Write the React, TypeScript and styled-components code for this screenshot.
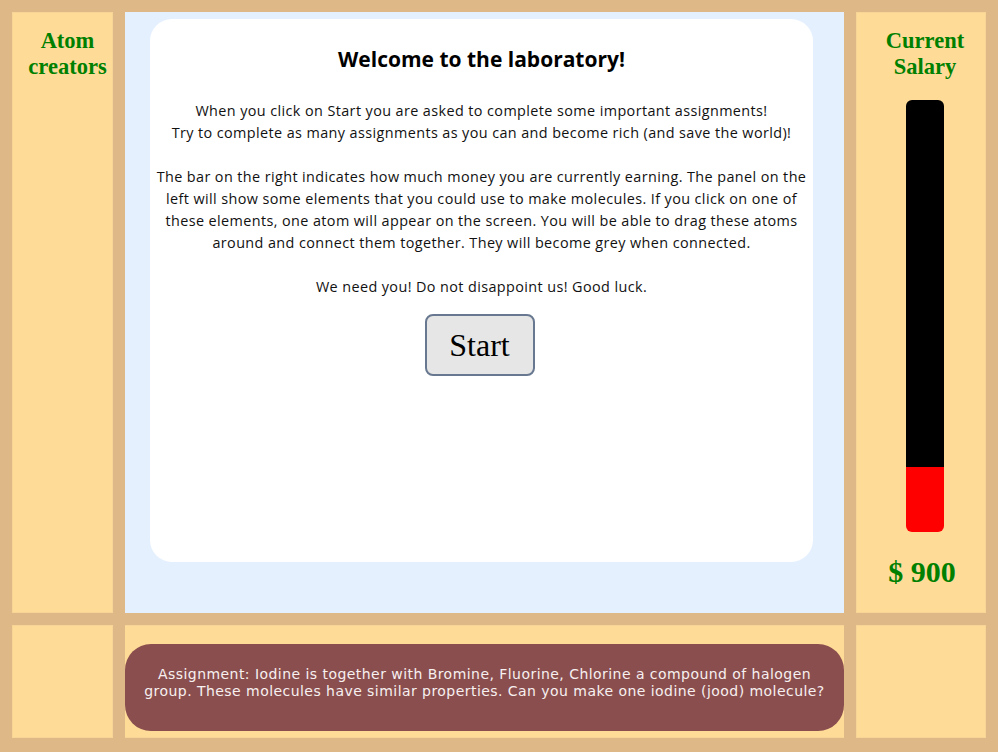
import React from 'react';
import styled, { createGlobalStyle } from 'styled-components';

const GlobalStyle = createGlobalStyle`
  html, body {
    margin: 0;
    padding: 0;
    background: #deb887;
  }
`;

const Layout = styled.div`
  width: 998px;
  height: 752px;
  box-sizing: border-box;
  padding: 12px 12px 14px 12px;
  background: #deb887;
  display: grid;
  grid-template-columns: 101px 719px 130px;
  grid-template-rows: 601px 1fr;
  gap: 12px;
`;

const Cell = styled.div<{ $tone?: 'sand' | 'sky' }>`
  box-sizing: border-box;
  background: ${p => (p.$tone === 'sky' ? '#e5f0ff' : '#ffdb98')};
  border: 1px solid ${p => (p.$tone === 'sky' ? '#e5f0ff' : '#f7d597')};
  min-width: 0;
`;

const SideColumn = styled(Cell)<{ $shift: number }>`
  display: flex;
  flex-direction: column;
  align-items: center;
  padding: 15px 0 0 ${p => p.$shift}px;
`;

const SideTitle = styled.h2`
  margin: 0;
  font-family: 'Liberation Serif', 'Times New Roman', serif;
  font-weight: bold;
  font-size: 22.5px;
  line-height: 26px;
  color: #008000;
  text-align: center;
`;

const SalaryBar = styled.div<{ $fill: number }>`
  margin-top: 20px;
  width: 38px;
  height: 432px;
  border-radius: 6px;
  background: linear-gradient(
    to top,
    #ff0000 0,
    #ff0000 ${p => p.$fill}%,
    #000000 ${p => p.$fill}%,
    #000000 100%
  );
`;

const Salary = styled.div`
  margin-top: 23px;
  font-family: 'Liberation Serif', 'Times New Roman', serif;
  font-weight: bold;
  font-size: 30px;
  line-height: 34px;
  color: #008000;
  padding-right: 6px;
`;

const Stage = styled(Cell)`
  padding: 6px 30px 50px 24px;
  display: flex;
`;

const WelcomeCard = styled.div`
  flex: 1;
  background: #ffffff;
  border-radius: 22px;
  padding: 27px 0 0 0;
  display: flex;
  flex-direction: column;
  align-items: center;
  font-family: 'Open Sans', Lato, sans-serif;
  color: #111;
`;

const Heading = styled.h1`
  margin: 0 0 28px 0;
  font-size: 21px;
  line-height: 26px;
  font-weight: 700;
  color: #000;
`;

const Paragraph = styled.p`
  margin: 0 0 22px 0;
  font-size: 14.4px;
  line-height: 22px;
  letter-spacing: 0.4px;
  text-align: center;
  white-space: nowrap;
`;

const StartButton = styled.button`
  margin-top: -6px;
  margin-right: 4px;
  width: 110px;
  height: 62px;
  border: 2px solid #687890;
  border-radius: 8px;
  background: #e6e6e6;
  font-family: 'Liberation Serif', 'Times New Roman', serif;
  font-size: 32px;
  color: #000;
  cursor: pointer;
  padding: 0;
`;

const AssignmentCell = styled(Cell)`
  padding-top: 18px;
  border-left: none;
  border-right: none;
`;

const AssignmentBox = styled.div`
  height: 87px;
  box-sizing: border-box;
  background: #8a4e4e;
  border-radius: 26px;
  padding: 22px 0 0 0;
  font-family: 'DejaVu Sans', Verdana, sans-serif;
  font-size: 14px;
  letter-spacing: 0.45px;
  line-height: 17px;
  color: #f7f0f0;
  text-align: center;
  white-space: nowrap;
`;

export default function App() {
  const salary = 900;
  const maxSalary = 6000;
  const fill = (salary / maxSalary) * 100;

  return (
    <>
      <GlobalStyle />
      <Layout>
        <SideColumn $shift={10}>
          <SideTitle>
            Atom
            <br />
            creators
          </SideTitle>
        </SideColumn>

        <Stage $tone="sky">
          <WelcomeCard>
            <Heading>Welcome to the laboratory!</Heading>
            <Paragraph>
              When you click on Start you are asked to complete some important assignments!
              <br />
              Try to complete as many assignments as you can and become rich (and save the world)!
            </Paragraph>
            <Paragraph>
              The bar on the right indicates how much money you are currently earning. The panel on the
              <br />
              left will show some elements that you could use to make molecules. If you click on one of
              <br />
              these elements, one atom will appear on the screen. You will be able to drag these atoms
              <br />
              around and connect them together. They will become grey when connected.
            </Paragraph>
            <Paragraph>We need you! Do not disappoint us! Good luck.</Paragraph>
            <StartButton>Start</StartButton>
          </WelcomeCard>
        </Stage>

        <SideColumn $shift={8}>
          <SideTitle>
            Current
            <br />
            Salary
          </SideTitle>
          <SalaryBar $fill={fill} />
          <Salary>$ {salary}</Salary>
        </SideColumn>

        <Cell />
        <AssignmentCell>
          <AssignmentBox>
            Assignment: Iodine is together with Bromine, Fluorine, Chlorine a compound of halogen
            <br />
            group. These molecules have similar properties. Can you make one iodine (jood) molecule?
          </AssignmentBox>
        </AssignmentCell>
        <Cell />
      </Layout>
    </>
  );
}
